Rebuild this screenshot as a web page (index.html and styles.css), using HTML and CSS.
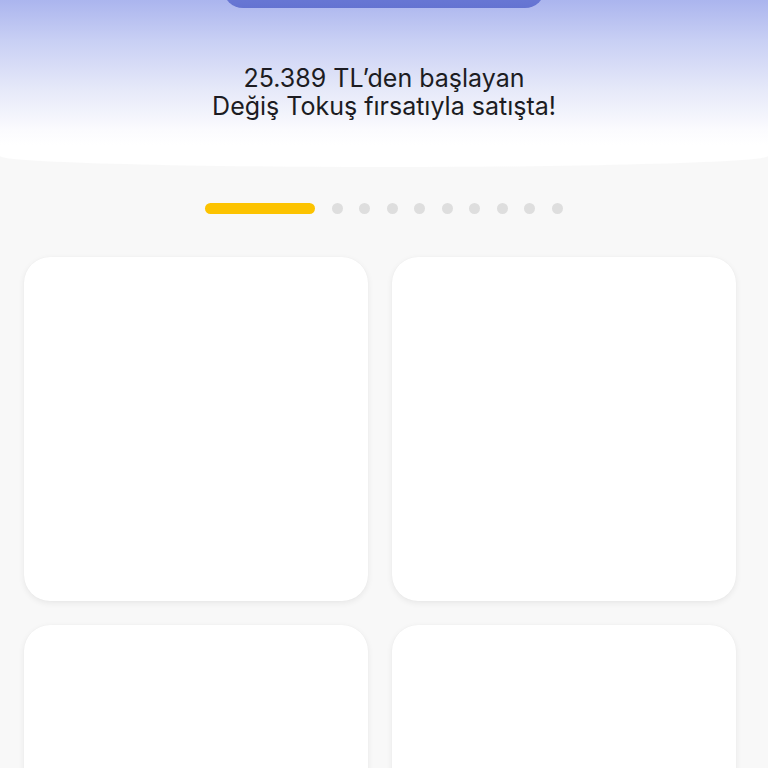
FILE: index.html
```html
<!DOCTYPE html>
<html lang="tr">
<head>
<meta charset="utf-8">
<link rel="stylesheet" href="styles.css">
</head>
<body>
<header class="hero">
  <div class="cta"></div>
  <p class="promo">25.389 TL’den başlayan<br>Değiş Tokuş fırsatıyla satışta!</p>
</header>
<div class="pager">
  <span class="bar"></span>
  <span class="dot"></span><span class="dot"></span><span class="dot"></span>
  <span class="dot"></span><span class="dot"></span><span class="dot"></span>
  <span class="dot"></span><span class="dot"></span><span class="dot"></span>
</div>
<main class="grid">
  <div class="card"></div>
  <div class="card"></div>
  <div class="card"></div>
  <div class="card"></div>
</main>
</body>
</html>
```
FILE: styles.css
```css
html, body {
  margin: 0;
  padding: 0;
}
body {
  background: #f8f8f8;
  font-family: Inter, "Noto Sans", Roboto, sans-serif;
  overflow: hidden;
  height: 768px;
}
.hero {
  height: 167px;
  background: linear-gradient(180deg, #abb5ee 0px, #c8cff4 40px, #e6e9f9 90px, #fbfbfe 130px, #ffffff 145px);
  border-radius: 0 0 50% 50% / 0 0 11px 11px;
  display: flex;
  flex-direction: column;
  align-items: center;
  overflow: hidden;
}
.cta {
  width: 322px;
  height: 40px;
  margin-top: -32px;
  border-radius: 22px;
  background: linear-gradient(180deg, #7483e0, #6473d1);
  flex: none;
}
.promo {
  margin: 56px 0 0;
  font-size: 25px;
  line-height: 28px;
  color: #1c1c22;
  text-align: center;
  letter-spacing: 0;
}
.pager {
  display: flex;
  justify-content: center;
  align-items: center;
  gap: 16.5px;
  margin-top: 36px;
  height: 11px;
}
.bar {
  width: 110px;
  height: 11px;
  border-radius: 6px;
  background: #fcc300;
}
.dot {
  width: 11px;
  height: 11px;
  border-radius: 50%;
  background: #dedede;
}
.grid {
  display: grid;
  grid-template-columns: 344px 344px;
  gap: 24px;
  padding: 43px 0 0 24px;
}
.card {
  height: 344px;
  background: #ffffff;
  border-radius: 26px;
  box-shadow: 0 2px 6px rgba(0, 0, 0, 0.07), 0 0 1px rgba(0, 0, 0, 0.05);
}
```
